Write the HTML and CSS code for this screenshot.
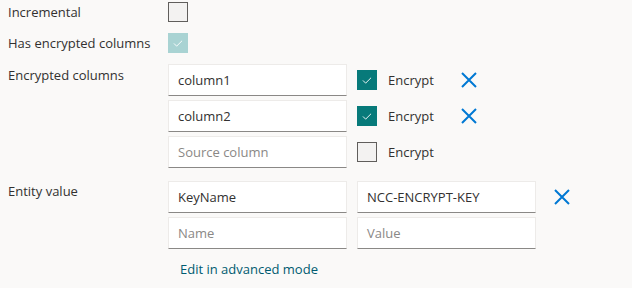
FILE: index.html
```html
<!DOCTYPE html>
<html lang="en">
<head>
    <meta charset="UTF-8">
    <title>Dataset settings</title>
    <link rel="stylesheet" href="styles.css">
</head>
<body>
    <div class="form">
        <div class="row row-check">
            <div class="label">Incremental</div>
            <div class="field"><span class="checkbox"></span></div>
        </div>
        <div class="row row-check">
            <div class="label">Has encrypted columns</div>
            <div class="field"><span class="checkbox checked disabled"><svg viewBox="0 0 20 20"><path d="M5.5 10.5 L8.5 13.5 L14.5 7.5"/></svg></span></div>
        </div>
        <div class="row">
            <div class="label label-top">Encrypted columns</div>
            <div class="list">
                <div class="item">
                    <div class="input">column1</div>
                    <div class="check-group">
                        <span class="checkbox checked"><svg viewBox="0 0 20 20"><path d="M5.5 10.5 L8.5 13.5 L14.5 7.5"/></svg></span>
                        <span class="check-label">Encrypt</span>
                    </div>
                    <button class="remove"><svg viewBox="0 0 16 16"><path d="M1 1 L15 15 M15 1 L1 15"/></svg></button>
                </div>
                <div class="item">
                    <div class="input">column2</div>
                    <div class="check-group">
                        <span class="checkbox checked"><svg viewBox="0 0 20 20"><path d="M5.5 10.5 L8.5 13.5 L14.5 7.5"/></svg></span>
                        <span class="check-label">Encrypt</span>
                    </div>
                    <button class="remove"><svg viewBox="0 0 16 16"><path d="M1 1 L15 15 M15 1 L1 15"/></svg></button>
                </div>
                <div class="item">
                    <div class="input placeholder">Source column</div>
                    <div class="check-group">
                        <span class="checkbox"></span>
                        <span class="check-label">Encrypt</span>
                    </div>
                </div>
            </div>
        </div>
        <div class="row row-entity">
            <div class="label label-top">Entity value</div>
            <div class="list">
                <div class="item">
                    <div class="input">KeyName</div>
                    <div class="input">NCC-ENCRYPT-KEY</div>
                    <button class="remove"><svg viewBox="0 0 16 16"><path d="M1 1 L15 15 M15 1 L1 15"/></svg></button>
                </div>
                <div class="item">
                    <div class="input placeholder">Name</div>
                    <div class="input placeholder">Value</div>
                </div>
                <a class="link" href="#">Edit in advanced mode</a>
            </div>
        </div>
    </div>
</body>
</html>
```

FILE: styles.css
```css
body {
    margin: 0;
    background-color: #faf9f8;
    color: #323130;
    font-family: "Segoe UI", "Open Sans", sans-serif;
    font-size: 13px;
}
.form {
    padding: 2px 0 0 8px;
    display: flex;
    flex-direction: column;
    gap: 11px;
}
.row {
    display: grid;
    grid-template-columns: 160px 1fr;
}
.row-entity {
    margin-top: 2px;
}
.label {
    line-height: 20px;
    align-self: center;
}
.label-top {
    align-self: start;
    padding-top: 1px;
}
.row-entity .label-top {
    padding-top: 0;
}
.field {
    display: flex;
    height: 20px;
}
.checkbox {
    width: 20px;
    height: 20px;
    box-sizing: border-box;
    border: 1px solid #605e5c;
    background-color: #f3f2f1;
    display: inline-flex;
    flex-shrink: 0;
}
.checkbox.checked {
    background-color: #077a7a;
    border-color: #077a7a;
}
.checkbox.disabled {
    background-color: #a9d3d3;
    border-color: #a9d3d3;
}
.checkbox svg {
    width: 18px;
    height: 18px;
}
.checkbox path {
    fill: none;
    stroke: #fff;
    stroke-width: 1;
}
.list {
    display: flex;
    flex-direction: column;
    gap: 4px;
}
.item {
    display: flex;
    align-items: center;
    gap: 10px;
    height: 32px;
}
.input {
    width: 179px;
    height: 32px;
    box-sizing: border-box;
    background-color: #fff;
    border: 1px solid #edebe9;
    border-bottom-color: #8a8886;
    padding: 0 9px;
    line-height: 30px;
    white-space: nowrap;
}
.placeholder {
    color: #8a8886;
}
.check-group {
    display: flex;
    align-items: center;
    gap: 11px;
    width: 86px;
}
.remove {
    width: 32px;
    height: 32px;
    padding: 0;
    border: none;
    background: none;
    display: flex;
    align-items: center;
    justify-content: center;
}
.remove svg {
    width: 16px;
    height: 16px;
}
.remove path {
    stroke: #0078d4;
    stroke-width: 2;
    fill: none;
}
.link {
    color: #005b70;
    text-decoration: none;
    margin: 6px 0 0 12px;
    line-height: 20px;
}
```
